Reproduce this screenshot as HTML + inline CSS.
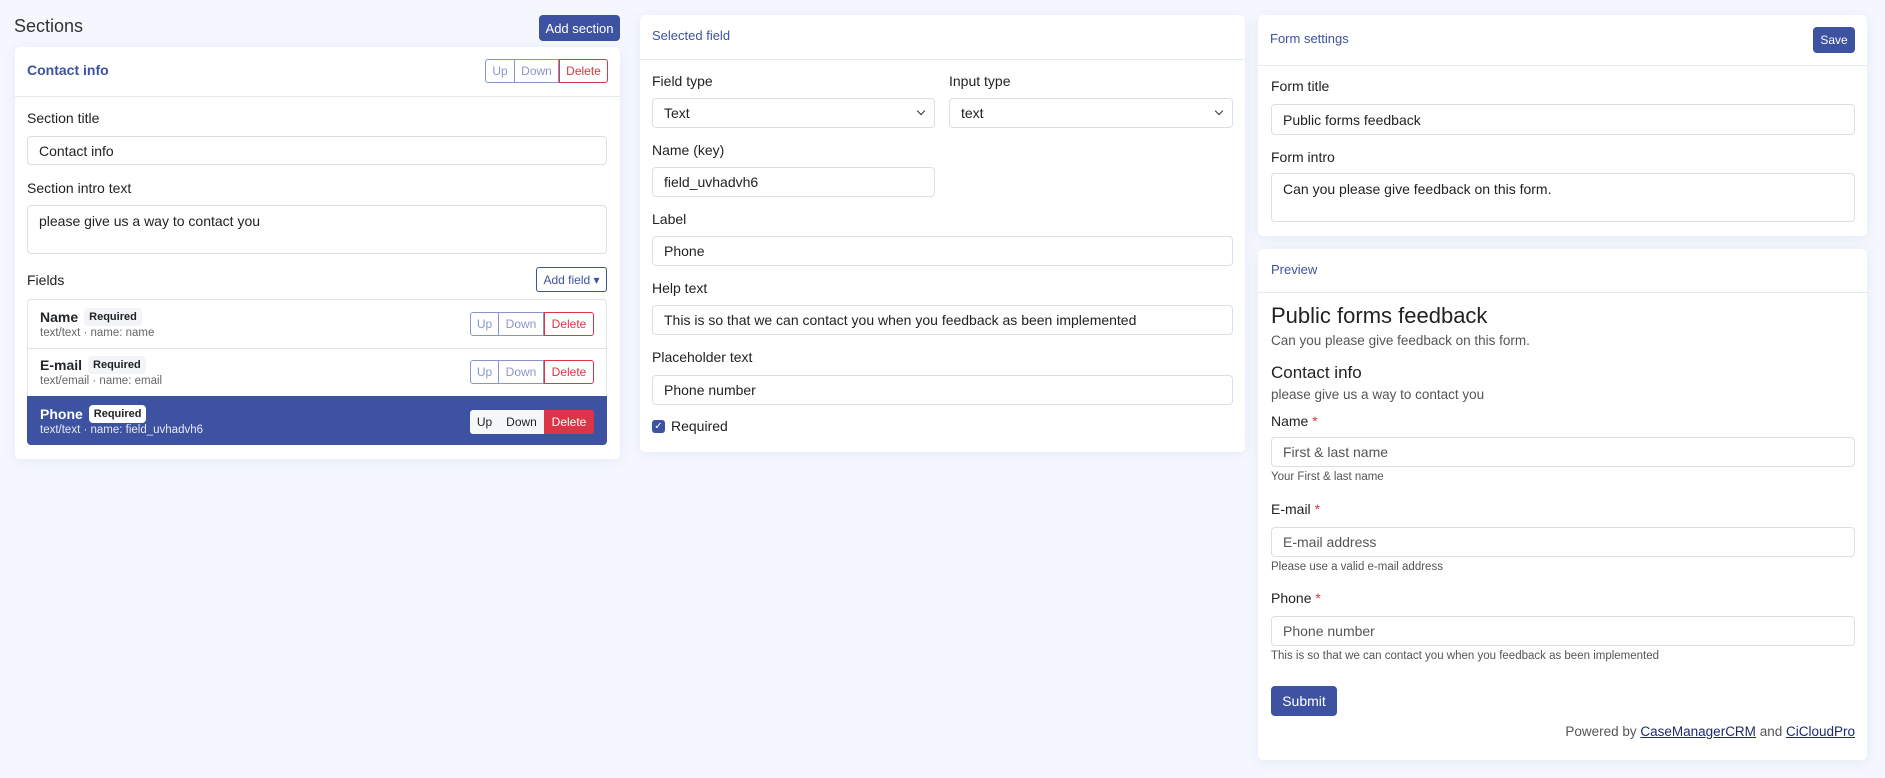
<!DOCTYPE html>
<html><head><meta charset="utf-8"><style>
*{box-sizing:border-box;margin:0;padding:0}
body{width:1885px;height:778px;background:#f4f7fd;font-family:"Liberation Sans",sans-serif;color:#212529;position:relative;overflow:hidden;font-size:14px}
.a{position:absolute}
.card{position:absolute;background:#fff;border-radius:5px;box-shadow:0 2px 12px rgba(60,80,160,.08)}
.hb{position:absolute;left:0;right:0;height:1px;background:#e6e9f0}
.lbl{position:absolute;font-size:14px;line-height:16px;color:#222}
.inp{position:absolute;border:1px solid #dcdfe5;border-radius:4px;background:#fff;font-size:14px;padding-left:11px;display:flex;align-items:center;color:#222}
.ta{align-items:flex-start;padding-top:7px}
.blue{color:#3d52a0}
.btn{position:absolute;background:#3d52a0;color:#fff;border-radius:4px;font-size:13px;display:flex;align-items:center;justify-content:center}
.grp{position:absolute;display:flex;height:24px;font-size:12px}
.grp span{display:flex;align-items:center;justify-content:center;border:1px solid #8996cc;color:#8996cc}
.grp span+span{border-left:none}
.grp .d{border:1px solid #dc3545;color:#dc3545;border-radius:0 3px 3px 0}
.grp .u{border-radius:3px 0 0 3px}
.item{position:absolute;left:27px;width:580px;border:1px solid #dfe2e8}
.it{position:absolute;left:12px;top:8px;font-weight:bold;font-size:14px;display:flex;align-items:center}
.badge{font-size:11px;font-weight:bold;background:#f2f4f7;border-radius:4px;padding:3px 5px;margin-left:6px;color:#222}
.sub{position:absolute;left:12px;top:27px;font-size:11.5px;color:#666}
.chev{position:absolute;right:10px;top:9px;width:8px;height:8px;border-right:1.3px solid #333;border-bottom:1.3px solid #333;transform:rotate(45deg);width:6px;height:6px}
.help{position:absolute;font-size:11.5px;color:#555}
.star{color:#dc3545}
</style></head><body>

<div class="a" style="left:14px;top:16px;font-size:18px;color:#333">Sections</div>
<div class="btn" style="left:539px;top:15px;width:81px;height:26px">Add section</div>

<div class="card" style="left:15px;top:47px;width:605px;height:412px"></div>
<div class="a blue" style="left:27px;top:62px;font-weight:bold;font-size:14px">Contact info</div>
<div class="grp" style="left:485px;top:59px;width:123px"><span class="u" style="width:30px">Up</span><span style="width:44px">Down</span><span class="d" style="width:49px">Delete</span></div>
<div class="hb" style="left:15px;width:605px;top:96px"></div>
<div class="lbl" style="left:27px;top:110px">Section title</div>
<div class="inp" style="left:27px;top:136px;width:580px;height:29px">Contact info</div>
<div class="lbl" style="left:27px;top:180px">Section intro text</div>
<div class="inp ta" style="left:27px;top:205px;width:580px;height:49px">please give us a way to contact you</div>
<div class="lbl" style="left:27px;top:272px">Fields</div>
<div class="a blue" style="left:536px;top:267px;width:71px;height:25px;border:1px solid #3d52a0;border-radius:3px;font-size:12px;display:flex;align-items:center;justify-content:center">Add field ▾</div>

<div class="item" style="top:299px;height:50px;border-radius:4px 4px 0 0">
<div class="it">Name<span class="badge">Required</span></div><div class="sub">text/text · name: name</div>
<div class="grp" style="left:442px;top:12px;width:124px"><span class="u" style="width:29px">Up</span><span style="width:45px">Down</span><span class="d" style="width:50px">Delete</span></div></div>
<div class="item" style="top:348px;height:49px;border-top:none">
<div class="it">E-mail<span class="badge">Required</span></div><div class="sub">text/email · name: email</div>
<div class="grp" style="left:442px;top:12px;width:124px"><span class="u" style="width:29px">Up</span><span style="width:45px">Down</span><span class="d" style="width:50px">Delete</span></div></div>
<div class="item" style="top:396px;height:49px;background:#3d52a0;border-color:#3d52a0;border-radius:0 0 4px 4px;color:#fff">
<div class="it" style="color:#fff">Phone<span class="badge" style="background:#fff">Required</span></div><div class="sub" style="color:#e6e9f5">text/text · name: field_uvhadvh6</div>
<div class="grp" style="left:442px;top:13px;width:124px"><span style="width:29px;background:#f6f7f9;color:#222;border:none;border-radius:3px 0 0 3px">Up</span><span style="width:45px;background:#f6f7f9;color:#222;border:none">Down</span><span style="width:50px;background:#dc3545;color:#fff;border:none;border-radius:0 3px 3px 0">Delete</span></div></div>

<div class="card" style="left:640px;top:15px;width:605px;height:437px"></div>
<div class="a blue" style="left:652px;top:28px;font-size:13px">Selected field</div>
<div class="hb" style="left:640px;width:605px;top:59px"></div>
<div class="lbl" style="left:652px;top:73px">Field type</div>
<div class="lbl" style="left:949px;top:73px">Input type</div>
<div class="inp" style="left:652px;top:98px;width:283px;height:30px">Text<span class="chev"></span></div>
<div class="inp" style="left:949px;top:98px;width:284px;height:30px">text<span class="chev"></span></div>
<div class="lbl" style="left:652px;top:142px">Name (key)</div>
<div class="inp" style="left:652px;top:167px;width:283px;height:30px">field_uvhadvh6</div>
<div class="lbl" style="left:652px;top:211px">Label</div>
<div class="inp" style="left:652px;top:236px;width:581px;height:30px">Phone</div>
<div class="lbl" style="left:652px;top:280px">Help text</div>
<div class="inp" style="left:652px;top:305px;width:581px;height:30px">This is so that we can contact you when you feedback as been implemented</div>
<div class="lbl" style="left:652px;top:349px">Placeholder text</div>
<div class="inp" style="left:652px;top:375px;width:581px;height:30px">Phone number</div>
<div class="a" style="left:652px;top:420px;width:13px;height:13px;background:#3d52a0;border-radius:3px;color:#fff;font-size:10px;line-height:13px;text-align:center">✓</div>
<div class="lbl" style="left:671px;top:418px">Required</div>

<div class="card" style="left:1258px;top:15px;width:609px;height:221px"></div>
<div class="a blue" style="left:1270px;top:31px;font-size:13px">Form settings</div>
<div class="btn" style="left:1813px;top:27px;width:42px;height:26px;font-size:12px">Save</div>
<div class="hb" style="left:1258px;width:609px;top:65px"></div>
<div class="lbl" style="left:1271px;top:78px">Form title</div>
<div class="inp" style="left:1271px;top:104px;width:584px;height:31px">Public forms feedback</div>
<div class="lbl" style="left:1271px;top:149px">Form intro</div>
<div class="inp ta" style="left:1271px;top:173px;width:584px;height:49px">Can you please give feedback on this form.</div>

<div class="card" style="left:1258px;top:249px;width:609px;height:511px"></div>
<div class="a blue" style="left:1271px;top:262px;font-size:13px">Preview</div>
<div class="hb" style="left:1258px;width:609px;top:292px"></div>
<div class="a" style="left:1271px;top:303px;font-size:22px;color:#222">Public forms feedback</div>
<div class="a" style="left:1271px;top:333px;font-size:13.5px;color:#555">Can you please give feedback on this form.</div>
<div class="a" style="left:1271px;top:363px;font-size:17px;color:#222">Contact info</div>
<div class="a" style="left:1271px;top:387px;font-size:13.5px;color:#555">please give us a way to contact you</div>
<div class="lbl" style="left:1271px;top:413px">Name <span class="star">*</span></div>
<div class="inp" style="left:1271px;top:437px;width:584px;height:30px;color:#555">First &amp; last name</div>
<div class="help" style="left:1271px;top:471px">Your First &amp; last name</div>
<div class="lbl" style="left:1271px;top:501px">E-mail <span class="star">*</span></div>
<div class="inp" style="left:1271px;top:527px;width:584px;height:30px;color:#555">E-mail address</div>
<div class="help" style="left:1271px;top:561px">Please use a valid e-mail address</div>
<div class="lbl" style="left:1271px;top:590px">Phone <span class="star">*</span></div>
<div class="inp" style="left:1271px;top:616px;width:584px;height:30px;color:#555">Phone number</div>
<div class="help" style="left:1271px;top:650px">This is so that we can contact you when you feedback as been implemented</div>
<div class="btn" style="left:1271px;top:686px;width:66px;height:30px;font-size:14px">Submit</div>
<div class="a" style="right:30px;top:724px;font-size:13.5px;color:#555">Powered by <u style="color:#1a2a6c">CaseManagerCRM</u> and <u style="color:#1a2a6c">CiCloudPro</u></div>
</body></html>
